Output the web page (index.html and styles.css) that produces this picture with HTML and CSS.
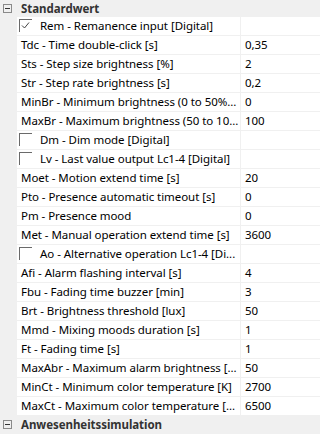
FILE: index.html
```html
<!DOCTYPE html>
<html>
<head>
<meta charset="UTF-8">
<title>Parameter</title>
<link rel="stylesheet" href="styles.css">
</head>
<body>
<div class="grid">
	<div class="group">
		<span class="toggle"><span class="minus"></span></span>
		<span class="gname">Standardwert</span>
	</div>
	<div class="row"><span class="gut"></span><span class="name"><span class="chk on"><svg width="11" height="11" viewBox="0 0 11 11"><polyline points="2,5.5 4.5,8 9,2.5" fill="none" stroke="#444" stroke-width="1"/></svg></span>Rem - Remanence input [Digital]</span><span class="val"></span></div>
	<div class="row"><span class="gut"></span><span class="name">Tdc - Time double-click [s]</span><span class="val">0,35</span></div>
	<div class="row"><span class="gut"></span><span class="name">Sts - Step size brightness [%]</span><span class="val">2</span></div>
	<div class="row"><span class="gut"></span><span class="name">Str - Step rate brightness [s]</span><span class="val">0,2</span></div>
	<div class="row"><span class="gut"></span><span class="name">MinBr - Minimum brightness (0 to 50%...</span><span class="val">0</span></div>
	<div class="row"><span class="gut"></span><span class="name">MaxBr - Maximum brightness (50 to 10...</span><span class="val">100</span></div>
	<div class="row"><span class="gut"></span><span class="name"><span class="chk"></span>Dm - Dim mode [Digital]</span><span class="val"></span></div>
	<div class="row"><span class="gut"></span><span class="name"><span class="chk"></span>Lv - Last value output Lc1-4 [Digital]</span><span class="val"></span></div>
	<div class="row"><span class="gut"></span><span class="name">Moet - Motion extend time [s]</span><span class="val">20</span></div>
	<div class="row"><span class="gut"></span><span class="name">Pto - Presence automatic timeout [s]</span><span class="val">0</span></div>
	<div class="row"><span class="gut"></span><span class="name">Pm - Presence mood</span><span class="val">0</span></div>
	<div class="row"><span class="gut"></span><span class="name">Met - Manual operation extend time [s]</span><span class="val">3600</span></div>
	<div class="row"><span class="gut"></span><span class="name"><span class="chk"></span>Ao - Alternative operation Lc1-4 [Di...</span><span class="val"></span></div>
	<div class="row"><span class="gut"></span><span class="name">Afi - Alarm flashing interval [s]</span><span class="val">4</span></div>
	<div class="row"><span class="gut"></span><span class="name">Fbu - Fading time buzzer [min]</span><span class="val">3</span></div>
	<div class="row"><span class="gut"></span><span class="name">Brt - Brightness threshold [lux]</span><span class="val">50</span></div>
	<div class="row"><span class="gut"></span><span class="name">Mmd - Mixing moods duration [s]</span><span class="val">1</span></div>
	<div class="row"><span class="gut"></span><span class="name">Ft - Fading time [s]</span><span class="val">1</span></div>
	<div class="row"><span class="gut"></span><span class="name">MaxAbr - Maximum alarm brightness [...</span><span class="val">50</span></div>
	<div class="row"><span class="gut"></span><span class="name">MinCt - Minimum color temperature [K]</span><span class="val">2700</span></div>
	<div class="row"><span class="gut"></span><span class="name">MaxCt - Maximum color temperature [...</span><span class="val">6500</span></div>
	<div class="group">
		<span class="toggle"><span class="minus"></span></span>
		<span class="gname">Anwesenheitssimulation</span>
	</div>
</div>
</body>
</html>
```
FILE: styles.css
```css
body {
	margin: 0;
	background-color: #f0f0f0;
	font-family: "Noto Sans", "Open Sans", sans-serif;
	font-size: 11.5px;
	letter-spacing: -0.05px;
	color: #000000;
}
.grid {
	width: 320px;
}
.group {
	display: flex;
	align-items: center;
	height: 17px;
	background-color: #f0f0f0;
}
.toggle {
	display: flex;
	align-items: center;
	justify-content: center;
	width: 9px;
	height: 9px;
	margin-left: 3px;
	margin-right: 9px;
	border: 1px solid #8a8a8a;
	box-sizing: border-box;
}
.minus {
	width: 5px;
	height: 1px;
	background-color: #333333;
}
.gname {
	font-weight: bold;
	color: #333333;
}
.row {
	display: grid;
	grid-template-columns: 17px 223px 1px 79px;
	height: 19px;
}
.row .gut {
	background-color: #f0f0f0;
}
.row .name, .row .val {
	display: block;
	height: 18px;
	line-height: 18px;
	background-color: #ffffff;
	border-bottom: 1px solid #f0f0f0;
	white-space: nowrap;
	overflow: hidden;
}
.row .name {
	padding-left: 4px;
	grid-column: 2;
}
.row .val {
	padding-left: 4px;
	grid-column: 4;
}
.chk {
	display: inline-block;
	vertical-align: top;
	width: 13px;
	height: 13px;
	margin-top: 2px;
	box-sizing: border-box;
	border-top: 1px solid #6a6a6a;
	border-left: 1px solid #6a6a6a;
	margin-left: -2px;
	margin-right: 8px;
}
.chk svg {
	display: block;
}
```
